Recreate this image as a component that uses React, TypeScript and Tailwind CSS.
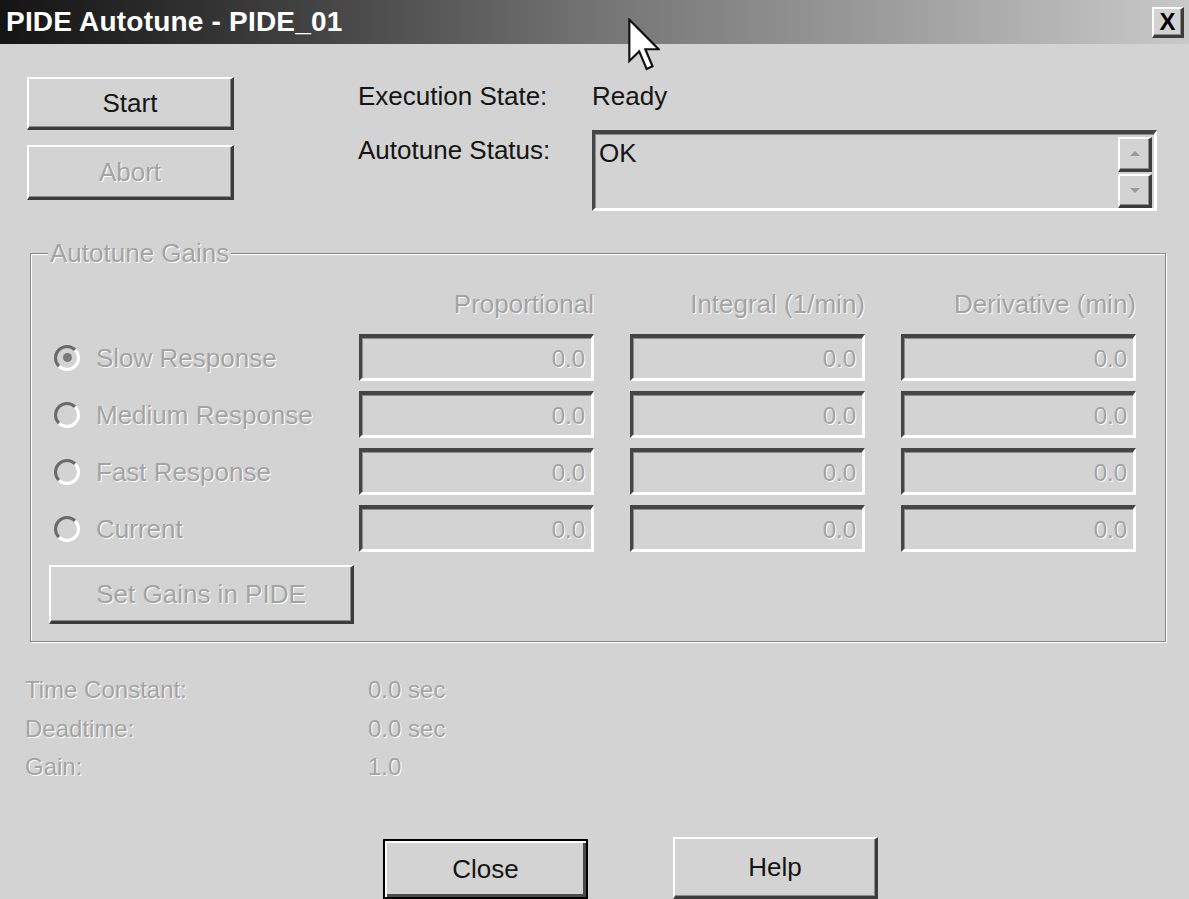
import React from 'react';

const dis = 'text-[#a3a3a3] [text-shadow:1px_1px_0_#ffffff]';
const raised =
  'border-t-2 border-l-2 border-t-white border-l-white border-b-[3px] border-r-[3px] border-b-[#3c3c3c] border-r-[#3c3c3c] bg-[#d3d3d3] shadow-[inset_-1px_-1px_0_#8a8a8a]';
const sunken =
  'border-t-[4px] border-l-[3px] border-t-[#454545] border-l-[#454545] border-b-[3px] border-r-[3px] border-b-white border-r-white shadow-[inset_1px_1px_0_#8c8c8c]';

const rows = [
  { label: 'Slow Response', checked: true },
  { label: 'Medium Response', checked: false },
  { label: 'Fast Response', checked: false },
  { label: 'Current', checked: false },
];

const Radio: React.FC<{ checked: boolean }> = ({ checked }) => (
  <div className="w-[26px] h-[26px] rounded-full border-[3px] border-t-[#6a6a6a] border-l-[#6a6a6a] border-b-white border-r-white bg-[#d3d3d3] flex items-center justify-center">
    {checked && <div className="w-[9px] h-[9px] rounded-full bg-[#7a7a7a]" />}
  </div>
);

const GainBox: React.FC = () => (
  <div className={`w-[235px] h-[47px] ${sunken} flex items-center justify-end pr-[6px] pt-[2px] text-[24px] ${dis}`}>
    0.0
  </div>
);

const Cursor: React.FC = () => (
  <svg className="absolute left-[628px] top-[18px]" width="32" height="54" viewBox="0 0 12 20">
    <path d="M0.5 0.5 L0.5 16 L4.2 12.4 L7 19 L9.2 18 L6.5 11.6 L11.5 11.6 Z" fill="#ffffff" stroke="#111111" strokeWidth="0.8" strokeLinejoin="miter" />
  </svg>
);

export default function App() {
  return (
    <div className="relative w-[1189px] h-[899px] overflow-hidden bg-[#d3d3d3] text-[#151515] font-['Liberation_Sans',Arial,sans-serif] text-[26px] leading-[30px]">
      {/* title bar */}
      <div className="h-[44px] flex items-center justify-between pl-[6px] pr-[5px] bg-gradient-to-r from-[#141414] via-[#747474] to-[#c9c9c9]">
        <span className="text-white font-bold text-[28px] tracking-[0.2px]">PIDE Autotune - PIDE_01</span>
        <div className={`w-[32px] h-[31px] ${raised} flex items-center justify-center text-[24px] font-bold leading-none text-black`}>
          X
        </div>
      </div>
      <Cursor />

      <div className="px-[27px]">
        {/* top area */}
        <div className="flex mt-[33px]">
          <div className="w-[207px] flex flex-col gap-[15px]">
            <div className={`h-[53px] ${raised} flex items-center justify-center`}>Start</div>
            <div className={`h-[55px] ${raised} flex items-center justify-center ${dis}`}>Abort</div>
          </div>
          <div className="ml-[124px] flex flex-col">
            <div className="flex h-[38px] items-center">
              <span className="w-[234px]">Execution State:</span>
              <span>Ready</span>
            </div>
            <div className="flex mt-[15px]">
              <span className="w-[234px] pt-[5px]">Autotune Status:</span>
              <div className={`w-[565px] h-[81px] ${sunken} flex justify-between`}>
                <span className="pl-[4px] pt-[4px]">OK</span>
                <div className="flex flex-col gap-[2px] pt-[3px] pr-[2px]">
                  <div className={`w-[34px] h-[35px] ${raised} flex items-center justify-center`}>
                    <div className="w-0 h-0 border-l-[5px] border-r-[5px] border-b-[5px] border-l-transparent border-r-transparent border-b-[#9a9a9a]" />
                  </div>
                  <div className={`w-[34px] h-[35px] ${raised} flex items-center justify-center`}>
                    <div className="w-0 h-0 border-l-[5px] border-r-[5px] border-t-[5px] border-l-transparent border-r-transparent border-t-[#9a9a9a]" />
                  </div>
                </div>
              </div>
            </div>
          </div>
        </div>

        {/* Autotune Gains group */}
        <div className="relative ml-[3px] mt-[42px] w-[1136px] h-[389px] border border-[#858585] shadow-[inset_1px_1px_0_#ffffff,1px_1px_0_#ffffff]">
          <span className={`absolute left-[17px] top-[-16px] px-[2px] bg-[#d3d3d3] ${dis}`}>Autotune Gains</span>
          <div className="pl-[23px] pt-[35px]">
            <div className="flex h-[30px] ml-[305px] gap-[36px]">
              <span className={`w-[235px] text-right ${dis}`}>Proportional</span>
              <span className={`w-[235px] text-right ${dis}`}>Integral (1/min)</span>
              <span className={`w-[235px] text-right ${dis}`}>Derivative (min)</span>
            </div>
            <div className="flex flex-col gap-[10px] mt-[15px]">
              {rows.map((r) => (
                <div key={r.label} className="flex items-center h-[47px]">
                  <div className="w-[305px] flex items-center gap-[16px]">
                    <Radio checked={r.checked} />
                    <span className={dis}>{r.label}</span>
                  </div>
                  <div className="flex gap-[36px]">
                    <GainBox />
                    <GainBox />
                    <GainBox />
                  </div>
                </div>
              ))}
            </div>
            <div className={`mt-[13px] ml-[-5px] w-[305px] h-[59px] ${raised} flex items-center justify-center ${dis}`}>
              Set Gains in PIDE
            </div>
          </div>
        </div>

        {/* model values */}
        <div className={`mt-[29px] ml-[-2px] text-[24px] leading-[38.5px] ${dis}`}>
          {[
            ['Time Constant:', '0.0 sec'],
            ['Deadtime:', '0.0 sec'],
            ['Gain:', '1.0'],
          ].map(([k, v]) => (
            <div key={k} className="flex">
              <span className="w-[343px]">{k}</span>
              <span>{v}</span>
            </div>
          ))}
        </div>

        {/* bottom buttons */}
        <div className="flex mt-[50px] ml-[356px] gap-[85px] items-end">
          <div className="w-[205px] h-[60px] border-2 border-black bg-[#d3d3d3] shadow-[inset_2px_2px_0_#ffffff,inset_-3px_-3px_0_#4a4a4a] flex items-center justify-center">
            Close
          </div>
          <div className={`w-[205px] h-[62px] ${raised} flex items-center justify-center`}>Help</div>
        </div>
      </div>
    </div>
  );
}
